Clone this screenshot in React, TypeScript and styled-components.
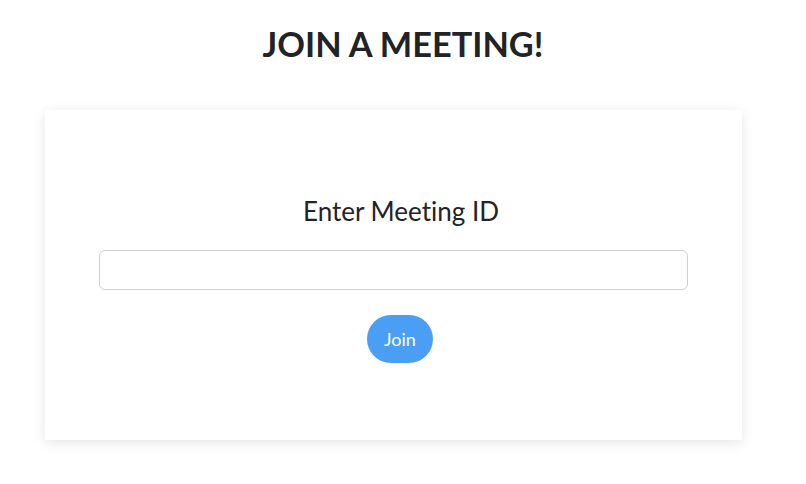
import React from "react";
import styled, { createGlobalStyle } from "styled-components";

const Global = createGlobalStyle`
  html, body { margin: 0; padding: 0; background: #ffffff; }
  body {
    font-family: Lato, "Open Sans", sans-serif;
    color: #222326;
    font-variant-ligatures: none;
  }
`;

const Page = styled.div`
  width: 806px;
  min-height: 484px;
  box-sizing: border-box;
  padding-bottom: 44px;
  display: flex;
  flex-direction: column;
  align-items: flex-start;
`;

const Title = styled.h1`
  margin: 23px 0 0 0;
  width: 806px;
  text-align: center;
  box-sizing: border-box;
  font-size: 34.3px;
  font-weight: 700;
  line-height: 1.2;
  color: #222326;
`;

const Card = styled.div`
  margin: 46px 0 0 45px;
  width: 697px;
  height: 330px;
  box-sizing: border-box;
  background: #ffffff;
  box-shadow: 0 3px 12px rgba(0, 0, 0, 0.1);
  display: flex;
  flex-direction: column;
  align-items: center;
  padding-top: 86px;
`;

const Label = styled.div`
  font-size: 26px;
  line-height: 1.2;
  color: #222326;
  padding-left: 15px;
`;

const Input = styled.input`
  margin-top: 23px;
  width: 589px;
  height: 40px;
  box-sizing: border-box;
  border: 1px solid #cfcfcf;
  border-radius: 6px;
  outline: none;
  font-family: Lato, sans-serif;
  font-size: 16px;
  padding: 0 12px;
`;

const Button = styled.button`
  margin-top: 25px;
  margin-left: 13px;
  width: 66px;
  height: 48px;
  border: none;
  border-radius: 24px;
  background: #4a9ef4;
  color: #ffffff;
  font-family: Lato, sans-serif;
  font-size: 18px;
  cursor: pointer;
`;

export default function App() {
  return (
    <>
      <Global />
      <Page>
        <Title>JOIN A MEETING!</Title>
        <Card>
          <Label>Enter Meeting ID</Label>
          <Input type="text" />
          <Button>Join</Button>
        </Card>
      </Page>
    </>
  );
}
